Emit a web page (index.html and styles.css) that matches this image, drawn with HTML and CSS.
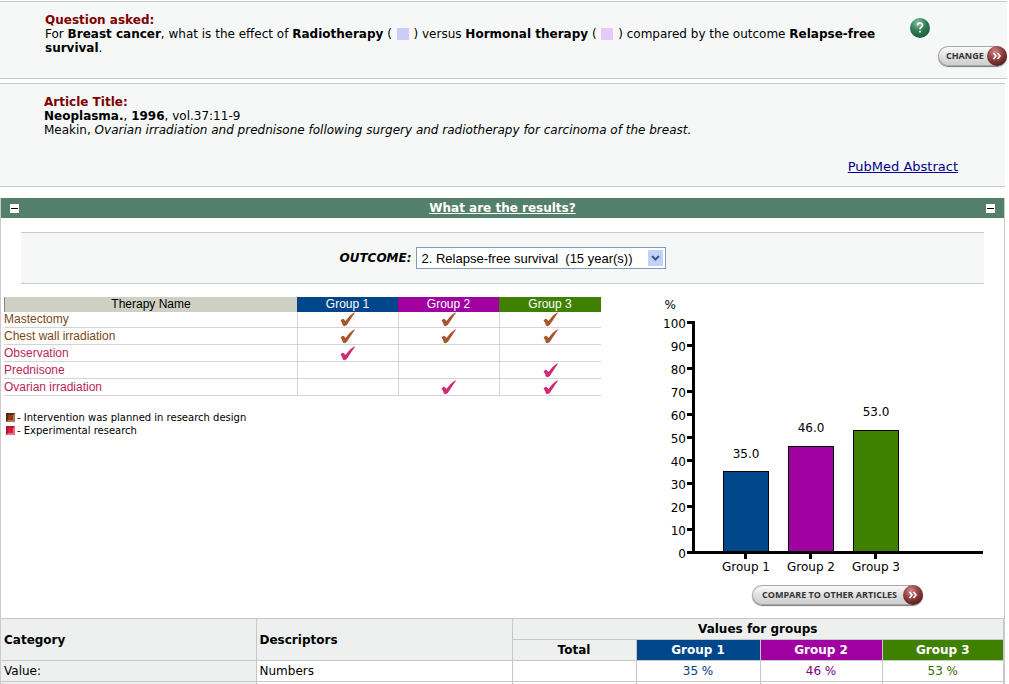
FILE: index.html
```html
<!DOCTYPE html>
<html lang="en">
<head>
<meta charset="utf-8">
<title>What are the results?</title>
<link rel="stylesheet" href="styles.css">
</head>
<body>
<svg class="defs" width="0" height="0" aria-hidden="true">
  <defs>
    <radialGradient id="red-ball" cx="40%" cy="30%" r="75%"><stop offset="0" stop-color="#cf8a8a"/><stop offset=".45" stop-color="#9c4546"/><stop offset="1" stop-color="#4d1719"/></radialGradient>
    <radialGradient id="green-ball" cx="40%" cy="25%" r="80%"><stop offset="0" stop-color="#8cc4a2"/><stop offset=".5" stop-color="#2f7d55"/><stop offset="1" stop-color="#1c5a3a"/></radialGradient>
    <symbol id="go" viewBox="0 0 20 20"><circle cx="10" cy="10" r="10" fill="url(#red-ball)"/><path d="M6.500 7 9 10l-2.500 3M10.500 7l2.500 3-2.500 3" fill="none" stroke="#fff" stroke-width="1.600"/></symbol>
    <symbol id="check" viewBox="0 0 16 15"><path d="M.5 8.500 2.500 6.800 4 7.200 5.500 9C8 5.500 11 2.500 14.500.3l.3.700C12 5 9 9.500 6.800 13L4.500 14.300 2.800 13.500C2.300 11.500 1.800 10 .5 8.500Z" fill="currentColor"/></symbol>
  </defs>
</svg>

<section class="panel question">
  <div class="question-text">
    <h2>Question asked:</h2>
    <p>For <b>Breast cancer</b>, what is the effect of <b>Radiotherapy</b> ( <span class="swatch blue"></span> ) versus <b>Hormonal therapy</b> ( <span class="swatch pink"></span> ) compared by the outcome <b>Relapse-free survival</b>.</p>
  </div>
  <div class="question-tools">
    <button class="help" aria-label="Help"><svg width="20" height="20" viewBox="0 0 20 20"><circle cx="10" cy="10" r="10" fill="url(#green-ball)"/><path d="M7.500 7.500C7.500 4.500 12.500 4.500 12.500 7.300 12.500 9 10 9.200 10 11.200M10 12.800v1.800" fill="none" stroke="#fff" stroke-width="1.800"/></svg></button>
    <button class="pill change"><span>CHANGE</span><svg width="20" height="20"><use href="#go"/></svg></button>
  </div>
</section>

<section class="panel article">
  <h2>Article Title:</h2>
  <p><b>Neoplasma.</b>, <b>1996</b>, vol.37:11-9</p>
  <p>Meakin, <i>Ovarian irradiation and prednisone following surgery and radiotherapy for carcinoma of the breast.</i></p>
  <div class="article-link"><a href="#">PubMed Abstract</a></div>
</section>

<main class="results">
  <header class="bar">
    <button class="toggle" aria-label="Collapse"></button>
    <a href="#">What are the results?</a>
    <button class="toggle" aria-label="Collapse section"></button>
  </header>

  <div class="outcome">
    <label for="outcome">OUTCOME:</label>
    <span class="select">
      <select id="outcome"><option>2. Relapse-free survival &nbsp;(15 year(s))</option></select>
      <svg width="15" height="16" viewBox="0 0 15 16" aria-hidden="true"><rect width="15" height="16" rx="1" fill="#bfd2f9"/><path d="M4 6l3.500 3.500L11 6" fill="none" stroke="#3c5688" stroke-width="2"/></svg>
    </span>
  </div>

  <div class="body">
    <div class="therapies">
      <table class="therapy">
        <thead><tr><th class="name">Therapy Name</th><th class="g1">Group 1</th><th class="g2">Group 2</th><th class="g3">Group 3</th></tr></thead>
        <tbody>
          <tr class="planned"><td>Mastectomy</td><td><svg><use href="#check"/></svg></td><td><svg><use href="#check"/></svg></td><td><svg><use href="#check"/></svg></td></tr>
          <tr class="planned"><td>Chest wall irradiation</td><td><svg><use href="#check"/></svg></td><td><svg><use href="#check"/></svg></td><td><svg><use href="#check"/></svg></td></tr>
          <tr class="research"><td>Observation</td><td><svg><use href="#check"/></svg></td><td></td><td></td></tr>
          <tr class="research"><td>Prednisone</td><td></td><td></td><td><svg><use href="#check"/></svg></td></tr>
          <tr class="research"><td>Ovarian irradiation</td><td></td><td><svg><use href="#check"/></svg></td><td><svg><use href="#check"/></svg></td></tr>
        </tbody>
      </table>
      <ul class="legend">
        <li><span class="key brown"></span>- Intervention was planned in research design</li>
        <li><span class="key red"></span>- Experimental research</li>
      </ul>
    </div>

    <div class="chart">
      <svg class="plot" width="330" height="280" viewBox="655 296 330 280" role="img" aria-label="Percent by group">
        <g class="bars">
          <rect x="723.500" y="471.500" width="45" height="80" fill="#00468a"/>
          <rect x="788.500" y="446.500" width="45" height="105" fill="#a000a0"/>
          <rect x="853.500" y="430.500" width="45" height="121" fill="#408000"/>
        </g>
        <path class="axis" d="M693.500 321v232M687 552.500h296M687 322.500h6M687 345.500h6M687 368.500h6M687 391.500h6M687 414.500h6M687 437.500h6M687 460.500h6M687 483.500h6M687 506.500h6M687 529.500h6M745.500 552v7M810.500 552v7M875.500 552v7"/>
        <g class="scale">
          <text x="676" y="309">%</text>
          <text x="686" y="328">100</text><text x="686" y="351">90</text><text x="686" y="374">80</text><text x="686" y="397">70</text><text x="686" y="420">60</text><text x="686" y="443">50</text><text x="686" y="466">40</text><text x="686" y="489">30</text><text x="686" y="512">20</text><text x="686" y="535">10</text><text x="686" y="558">0</text>
        </g>
        <g class="values">
          <text x="746" y="458">35.0</text><text x="811" y="432">46.0</text><text x="876" y="416">53.0</text>
          <text x="746" y="571">Group 1</text><text x="811" y="571">Group 2</text><text x="876" y="571">Group 3</text>
        </g>
      </svg>
      <button class="pill compare"><span>COMPARE TO OTHER ARTICLES</span><svg width="20" height="20"><use href="#go"/></svg></button>
    </div>
  </div>

  <table class="values-table">
    <colgroup><col class="c-cat"><col class="c-desc"><col class="c-total"><col class="c-total"><col class="c-g"><col></colgroup>
    <thead>
      <tr><th class="left" rowspan="2">Category</th><th class="left" rowspan="2">Descriptors</th><th colspan="4">Values for groups</th></tr>
      <tr><th>Total</th><th class="g1">Group 1</th><th class="g2">Group 2</th><th class="g3">Group 3</th></tr>
    </thead>
    <tbody>
      <tr><th class="left row-name">Value:</th><td class="left">Numbers</td><td></td><td class="t1">35 %</td><td class="t2">46 %</td><td class="t3">53 %</td></tr>
      <tr class="tail"><th class="left"></th><td></td><td></td><td></td><td></td><td></td></tr>
    </tbody>
  </table>
</main>
</body>
</html>
```
FILE: styles.css
```css
* { box-sizing: border-box; }
body { margin: 0; padding-top: 1px; background: #fff; color: #000; font: 12px/14px "DejaVu Sans", Verdana, sans-serif; overflow-x: hidden; }
h2, p, ul { margin: 0; padding: 0; }
h2 { color: #800000; font-size: 12px; line-height: 14px; }
button { border: 0; padding: 0; background: none; cursor: pointer; }
svg { display: block; }
.defs { position: absolute; }

.panel { background: #f6f8f8; border-top: 1px solid #c3c9c9; border-bottom: 1px solid #c3c9c9; }
.question { display: flex; height: 78px; margin-right: 2px; padding: 11px 0 0 45px; }
.question-text { flex: 1; padding-right: 20px; }
.question-tools { width: 99px; padding: 5px 0 0; display: flex; flex-direction: column; gap: 8px; }
.help { width: 20px; height: 20px; align-self: flex-start; margin-left: 2px; }
.swatch { display: inline-block; width: 12px; height: 12px; margin: 0 1px; vertical-align: -2px; }
.blue { background: #ccccf6; }
.pink { background: #e8c8f8; }

.pill { display: flex; align-items: center; justify-content: space-between; height: 20px; border-radius: 10px; border: 1px solid #a8a8a8; border-right: 0; background: linear-gradient(#fafafa, #dcdcdc 60%, #cfcfcf); box-shadow: 0 1px 1px #777; color: #333; font: bold 9px/18px "Open Sans", sans-serif; white-space: nowrap; }
.pill svg { flex: none; }
.change { width: 69px; align-self: flex-end; padding-left: 7px; }
.compare { width: 171px; padding-left: 9px; }

.article { margin: 4px 4px 0 0; padding: 11px 47px 12px 44px; }
.article-link { padding-top: 23px; text-align: right; }
.article-link a { color: #00008b; font-size: 13px; }

.results { margin: 11px 4px 0 0; border: 1px solid #ccc; border-top: 0; border-bottom: 0; }
.bar { display: flex; align-items: center; justify-content: space-between; height: 20px; padding: 0 8px; background: #557f6d; }
.bar a { color: #fff; font-weight: bold; }
.toggle { width: 11px; height: 11px; border: 1px solid #557f6d; background: linear-gradient(#000, #000) center / 7px 1px no-repeat #fff; }

.outcome { display: flex; align-items: center; justify-content: center; gap: 4px; height: 52px; margin: 14px 20px 13px 20px; background: #f6f8f8; border-top: 1px solid #c3c9c9; border-bottom: 1px solid #c3c9c9; }
.outcome label { font-size: 12px; font-weight: bold; font-style: italic; }
.select { position: relative; }
.select select { display: block; width: 250px; height: 22px; padding: 0 20px 0 5px; border: 1px solid #7f9db9; border-radius: 0; background: #fff; color: #000; appearance: none; font: 13px "Liberation Sans", Arial, sans-serif; }
.select svg { position: absolute; top: 3px; right: 3px; pointer-events: none; }

.body { display: flex; justify-content: space-between; padding: 0 19px 0 3px; }
.therapies { width: 597px; }
.therapy { width: 100%; table-layout: fixed; border-collapse: separate; border-spacing: 0; font: 12px/15px "Liberation Sans", Arial, sans-serif; }
.therapy th { width: 101px; height: 15px; padding: 0; font-weight: normal; }
.therapy th.g3 { width: 102px; }
.therapy th.name { width: auto; background: #cfd0c4; border-left: 1px solid #888; }
.therapy td { height: 17px; padding: 0; border-bottom: 1px solid #d4d4d4; line-height: 16px; }
.therapy tr:first-child td { height: 16px; line-height: 15px; }
.therapy td + td { border-left: 1px solid #d4d4d4; }
.therapy td svg { width: 16px; height: 15px; margin: 0 auto; }
.planned { color: #7d4617; }
.research { color: #b8265c; }
.planned svg { color: #a8562f; }
.research svg { color: #d02a74; }
.therapy .g1, .values-table .g1 { background: #00468a; color: #fff; }
.therapy .g2, .values-table .g2 { background: #a000a0; color: #fff; }
.therapy .g3, .values-table .g3 { background: #408000; color: #fff; }

.legend { list-style: none; padding: 15px 0 0 2px; font-size: 10px; line-height: 13px; }
.legend li { display: flex; align-items: center; gap: 2px; }
.key { width: 9px; height: 9px; border: 2px solid; }
.brown { background: #943c10; border-color: #552a18 #ad7862 #ad7862 #552a18; }
.red { background: #e5183c; border-color: #a61c38 #e27088 #e27088 #a61c38; }

.chart { padding-bottom: 13px; }
.compare { margin: 9px 0 0 97px; }
.plot { margin-top: -1px; }
.plot text { font: 12px "DejaVu Sans", sans-serif; }
.bars rect { stroke: #000; }
.axis { fill: none; stroke: #000; stroke-width: 3; }
.scale text { text-anchor: end; }
.values text { text-anchor: middle; }

.values-table { width: 100%; table-layout: fixed; border-collapse: collapse; border-top: 1px solid #c6c8c4; font-size: 12px; line-height: 14px; }
.c-cat { width: 255px; }
.c-desc { width: 256px; }
.c-total { width: 124px; }
.c-g { width: 122px; }
.values-table th, .values-table td { height: 21px; padding: 0 3px; border: 1px solid #c6c8c4; text-align: center; }
.values-table tr > :first-child.left { border-left: 0; }
.values-table th { background: #eef0f0; }
.values-table .left { text-align: left; }
.values-table .row-name { font-weight: normal; }
.values-table .tail > * { height: 2px; border-bottom: 0; }
.t1 { color: #003c78; }
.t2 { color: #800080; }
.t3 { color: #3c6a00; }
```
